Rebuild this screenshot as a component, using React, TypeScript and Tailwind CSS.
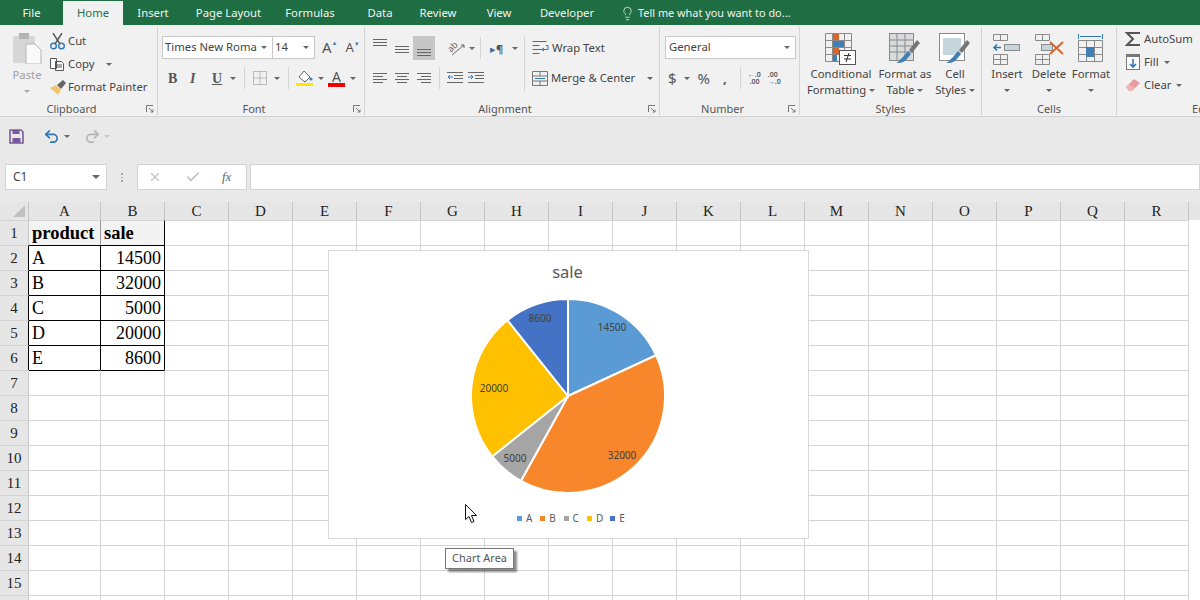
import { Lightbulb, Undo2, Redo2, X, Check } from "lucide-react";

const ui = "font-['Noto_Sans',sans-serif]";
const serif = "font-['Liberation_Serif',serif]";

const tabs = [
  { name: "File", w: "w-[63px]" },
  { name: "Home", w: "w-[60px]", active: true },
  { name: "Insert", w: "w-[60px]" },
  { name: "Page Layout", w: "w-[91px]" },
  { name: "Formulas", w: "w-[72px]" },
  { name: "Data", w: "w-[68px]" },
  { name: "Review", w: "w-[48px]" },
  { name: "View", w: "w-[74px]" },
  { name: "Developer", w: "w-[62px]" },
];

const columns = [
  { name: "A", w: "w-[72px]" },
  { name: "B", w: "w-[64px]" },
  ...["C", "D", "E", "F", "G", "H", "I", "J", "K", "L", "M", "N", "O", "P", "Q", "R"].map((name) => ({ name, w: "w-[64px]" })),
];

const data = [
  { name: "A", value: 14500, color: "#5b9bd5", lx: 612, ly: 327 },
  { name: "B", value: 32000, color: "#f8862b", lx: 622, ly: 455 },
  { name: "C", value: 5000, color: "#a5a5a5", lx: 515, ly: 458 },
  { name: "D", value: 20000, color: "#ffc000", lx: 494, ly: 388 },
  { name: "E", value: 8600, color: "#4472c4", lx: 540, ly: 318 },
];

const Caret = ({ className = "" }: { className?: string }) => (
  <span className={`inline-block w-0 h-0 border-x-[3px] border-x-transparent border-t-[3px] border-t-[#666] ${className}`} />
);

const GroupLabel = ({ children, launcher = true }: { children: string; launcher?: boolean }) => (
  <div className={`absolute bottom-[-1px] left-0 right-0 flex justify-center text-[11px] leading-[14px] text-[#555] ${launcher ? "pr-[14px]" : ""}`}>
    {children}
    {launcher && (
      <svg className="absolute right-[3px] top-[3px]" width="8" height="8" viewBox="0 0 8 8" fill="none" stroke="#777">
        <path d="M.5 7V.5H7M3 3l4 4M7 4.5V7H4.5" />
      </svg>
    )}
  </div>
);

const Group = ({ w, children }: { w: string; children: React.ReactNode }) => (
  <div className={`relative h-[88px] shrink-0 border-r border-[#d4d4d4] ${w}`}>{children}</div>
);

const Lines = ({ align }: { align: "l" | "c" | "r" }) => {
  const rows = align === "l" ? [[0, 14], [0, 10], [0, 14], [0, 10]] : align === "c" ? [[0, 14], [2, 10], [0, 14], [2, 10]] : [[0, 14], [4, 10], [0, 14], [4, 10]];
  return (
    <svg width="14" height="10" viewBox="0 0 14 10" stroke="#666">
      {rows.map(([x, w], i) => (
        <path key={i} d={`M${x} ${i * 3 + 0.5}h${w}`} />
      ))}
    </svg>
  );
};

function Clipboard() {
  return (
    <Group w="w-[158px]">
      <div className="flex gap-[4px] pl-[12px] pt-[5px]">
        <div className="flex w-[30px] flex-col items-center text-[#a0a0a0]">
          <svg className="mt-[1px]" width="30" height="31" viewBox="0 0 30 31">
            <rect x="1" y="3" width="22" height="27" rx="2" fill="#d6d6d6" />
            <rect x="7" y="0" width="10" height="6" fill="#b5b5b5" />
            <path d="M14 11h9l6 6v14H14z" fill="#fafafa" stroke="#b5b5b5" />
          </svg>
          <span className="mt-[3px] text-[11.3px] leading-[16px]">Paste</span>
          <Caret className="mt-[7px] border-t-[#aaa]" />
        </div>
        <div className="ml-[4px] flex flex-col gap-[5px] text-[11.3px] text-[#444]">
          <div className="flex h-[18px] items-center gap-[3px]">
            <svg width="15" height="17" viewBox="0 0 15 17" fill="none">
              <path d="M3 0l7 11M12 0L5 11" stroke="#555" strokeWidth="1.4" />
              <circle cx="3.5" cy="13" r="2.8" stroke="#2f78b5" strokeWidth="1.4" />
              <circle cx="11.5" cy="13" r="2.8" stroke="#2f78b5" strokeWidth="1.4" />
            </svg>
            <span>Cut</span>
          </div>
          <div className="flex h-[18px] items-center gap-[3px]">
            <svg width="15" height="15" viewBox="0 0 15 15" fill="#fff" stroke="#555">
              <path d="M.5 1.5h6v10h-6zM5.5 4.5h6l2 2v7h-8zM7 8h5M7 10h5" />
            </svg>
            <span>Copy</span>
            <Caret className="ml-[9px]" />
          </div>
          <div className="flex h-[18px] items-center gap-[2px]">
            <svg width="16" height="15" viewBox="0 0 16 15">
              <path d="M0 8l6-3 5 5-3 5z" fill="#efc46f" />
              <path d="M7 5l6-5 3 3-5 6z" fill="#666" />
            </svg>
            <span>Format Painter</span>
          </div>
        </div>
      </div>
      <GroupLabel>Clipboard</GroupLabel>
    </Group>
  );
}

function Font() {
  return (
    <Group w="w-[207px]">
      <div className="flex flex-col pl-[4px] pt-[9px]">
        <div className="flex items-center">
          <div className="flex h-[23px] w-[111px] items-center justify-between border border-[#c8c8c8] bg-white pl-[2px] pr-[5px] text-[11.3px] text-[#444]">
            <span className="whitespace-nowrap">Times New Roma</span>
            <Caret />
          </div>
          <div className="-ml-px flex h-[23px] w-[43px] items-center justify-between border border-[#c8c8c8] bg-white pl-[2px] pr-[5px] text-[11.3px] text-[#444]">
            <span>14</span>
            <Caret />
          </div>
          <div className="ml-[7px] flex items-start text-[15px] leading-none text-[#555]">
            A<span className="text-[6px] text-[#3f7fb5]">▲</span>
          </div>
          <div className="ml-[8px] flex items-start text-[13px] leading-none text-[#555]">
            A<span className="text-[6px] text-[#3f7fb5]">▼</span>
          </div>
        </div>
        <div className="flex h-[32px] items-center pl-[6px] pt-[6px] text-[#555]">
          <span className={`${serif} w-[22px] text-[14px] font-bold`}>B</span>
          <span className={`${serif} w-[22px] text-[14px] font-bold italic`}>I</span>
          <span className={`${serif} w-[17px] text-[14px] font-bold underline`}>U</span>
          <Caret className="ml-[1px]" />
          <div className="ml-[8px] h-[22px] w-px bg-[#d4d4d4]" />
          <svg className="ml-[8px]" width="14" height="14" viewBox="0 0 14 14" fill="none" stroke="#888" strokeDasharray="1 1">
            <path d="M.5.5h13v13H.5zM.5 7h13M7 .5v13" />
          </svg>
          <Caret className="ml-[7px]" />
          <div className="ml-[8px] h-[22px] w-px bg-[#d4d4d4]" />
          <svg className="ml-[7px]" width="17" height="16" viewBox="0 0 17 16">
            <path d="M8 1l6 6-5 5-6-5z" fill="#fff" stroke="#666" />
            <circle cx="15" cy="9" r="1.6" fill="#3f7fb5" />
            <rect y="13" width="17" height="3" fill="#ffe600" />
          </svg>
          <Caret className="ml-[5px]" />
          <div className="ml-[4px] flex w-[17px] flex-col items-center">
            <span className="text-[14px] leading-[13px] text-[#555]">A</span>
            <span className="h-[4px] w-[17px] bg-[#f00000]" />
          </div>
          <Caret className="ml-[5px]" />
        </div>
      </div>
      <GroupLabel>Font</GroupLabel>
    </Group>
  );
}

function Alignment() {
  return (
    <Group w="w-[295px]">
      <div className="flex h-[72px] pl-[4px] pt-[9px] text-[11.3px] text-[#444]">
        <div className="flex w-[155px] flex-col">
          <div className="flex h-[24px] items-center">
            <div className="flex h-[24px] w-[22px] items-start justify-center pt-[3px]">
              <svg width="14" height="8" stroke="#666"><path d="M0 .5h14M0 3.5h14M0 6.5h14" /></svg>
            </div>
            <div className="flex h-[24px] w-[22px] items-center justify-center pt-[3px]">
              <svg width="14" height="8" stroke="#666"><path d="M0 .5h14M0 3.5h14M0 6.5h14" /></svg>
            </div>
            <div className="flex h-[24px] w-[22px] items-end justify-center bg-[#c6c6c6] pb-[3px]">
              <svg width="14" height="8" stroke="#666"><path d="M0 .5h14M0 3.5h14M0 6.5h14" /></svg>
            </div>
            <div className="relative ml-[12px] h-[15px] w-[18px]">
              <span className="absolute left-0 top-0 -rotate-45 text-[9px] leading-[11px] text-[#666]">ab</span>
              <svg className="absolute left-0 top-0" width="18" height="15" viewBox="0 0 18 15" fill="none" stroke="#666">
                <path d="M5 14L17 4M14 4h3v3" />
              </svg>
            </div>
            <Caret className="ml-[4px]" />
            <div className="ml-[5px] h-[22px] w-px bg-[#d4d4d4]" />
            <span className="ml-[9px] text-[11px] leading-none text-[#3f6f9f]">▸</span>
            <span className="text-[11px] font-bold leading-none text-[#555]">¶</span>
            <Caret className="ml-[9px]" />
          </div>
          <div className="mt-[6px] flex h-[24px] items-center">
            <div className="flex w-[22px] justify-center"><Lines align="l" /></div>
            <div className="flex w-[22px] justify-center"><Lines align="c" /></div>
            <div className="flex w-[22px] justify-center"><Lines align="r" /></div>
            <div className="mx-[4px] h-[22px] w-px bg-[#d4d4d4]" />
            <svg className="ml-[3px]" width="16" height="12" viewBox="0 0 16 12" fill="none" stroke="#666">
              <path d="M0 .5h16M7 3.5h9M7 6.5h9M0 10.5h16" />
              <path d="M6 5H1M3 3L1 5l2 2" stroke="#2f78b5" />
            </svg>
            <svg className="ml-[5px]" width="16" height="12" viewBox="0 0 16 12" fill="none" stroke="#666">
              <path d="M0 .5h16M7 3.5h9M7 6.5h9M0 10.5h16" />
              <path d="M0 5h5M3 3l2 2-2 2" stroke="#2f78b5" />
            </svg>
          </div>
        </div>
        <div className="mr-[7px] h-[55px] w-px bg-[#d4d4d4]" />
        <div className="flex flex-col">
          <div className="flex h-[24px] items-center gap-[3px]">
            <svg width="17" height="15" viewBox="0 0 17 15" fill="none" stroke="#666">
              <path d="M.5.5h14M.5 4.5h7M.5 8.5h14M.5 12.5h7" />
              <path d="M14 4.5h2v4h-6M12 7l-2 1.5L12 10" stroke="#2f78b5" />
            </svg>
            <span>Wrap Text</span>
          </div>
          <div className="mt-[6px] flex h-[24px] items-center gap-[3px]">
            <svg width="16" height="15" viewBox="0 0 16 15" fill="none" stroke="#777">
              <path d="M.5.5h15v14H.5zM.5 5h15M.5 10h15M8 .5V5M8 10v4.5" />
              <path d="M3 7.5h10" stroke="#2f78b5" />
            </svg>
            <span>Merge &amp; Center</span>
            <Caret className="ml-[9px]" />
          </div>
        </div>
      </div>
      <GroupLabel>Alignment</GroupLabel>
    </Group>
  );
}

function NumberGroup() {
  return (
    <Group w="w-[140px]">
      <div className="pl-[5px] pt-[9px] text-[#555]">
        <div className="flex h-[23px] w-[131px] items-center justify-between border border-[#c8c8c8] bg-white pl-[3px] pr-[5px] text-[11.3px] text-[#444]">
          <span>General</span>
          <Caret />
        </div>
        <div className="mt-[7px] flex h-[24px] items-center pl-[3px]">
          <span className="text-[15px] leading-none">$</span>
          <Caret className="ml-[7px]" />
          <span className="ml-[8px] text-[15px] leading-none">%</span>
          <span className="ml-[13px] text-[13px] font-bold leading-none">,</span>
          <div className="ml-[13px] h-[22px] w-px bg-[#d4d4d4]" />
          <span className="ml-[7px] w-[18px] text-[7px] font-semibold leading-[7px]">
            <span className="text-[#2f78b5]">←</span>.0<br />
            &nbsp;.00
          </span>
          <span className="ml-[2px] w-[18px] text-[7px] font-semibold leading-[7px]">
            .00<br />
            <span className="text-[#2f78b5]">→</span>.0
          </span>
        </div>
      </div>
      <GroupLabel>Number</GroupLabel>
    </Group>
  );
}

function Styles() {
  return (
    <Group w="w-[182px]">
      <div className="flex pl-[7px] pt-[6px] text-[11.3px] leading-[16px] text-[#444]">
        <div className="flex w-[68px] flex-col items-center">
          <svg width="32" height="32" viewBox="0 0 32 32" fill="none" stroke="#8a8a8a">
            <path d="M.5.5h26v28H.5zM.5 7.5h26M.5 14.5h26M.5 21.5h26M7.5.5v28M19.5.5v28" />
            <rect x="8" y="1" width="6" height="6" fill="#d9652b" stroke="none" />
            <rect x="8" y="8" width="11" height="6" fill="#3f7fb5" stroke="none" />
            <rect x="8" y="15" width="6" height="6" fill="#d9652b" stroke="none" />
            <rect x="8" y="22" width="4" height="6" fill="#3f7fb5" stroke="none" />
            <rect x="14.5" y="17.5" width="16" height="14" fill="#fff" stroke="#555" />
            <path d="M19 22.5h7M19 26h7M24 20l-3 9" stroke="#333" />
          </svg>
          <span className="mt-px whitespace-nowrap">Conditional</span>
          <span className="whitespace-nowrap">Formatting <Caret className="mb-[2px]" /></span>
        </div>
        <div className="flex w-[60px] flex-col items-center">
          <svg width="32" height="32" viewBox="0 0 32 32" fill="none" stroke="#8a8a8a">
            <rect x=".5" y=".5" width="24" height="27" fill="#d8dcdc" />
            <path d="M.5 7h24M.5 13h24M.5 19h24M8 .5v27M16 .5v27" />
            <path d="M14 24l5-6 3 3-5 6c-3 3-7 3-10 3 3-1 4-4 7-6z" fill="#3f7fb5" stroke="none" />
            <path d="M20 17l8-10 3 3-8 10z" fill="#777" stroke="none" />
          </svg>
          <span className="mt-px whitespace-nowrap">Format as</span>
          <span className="whitespace-nowrap">Table <Caret className="mb-[2px]" /></span>
        </div>
        <div className="flex w-[40px] flex-col items-center">
          <svg width="32" height="32" viewBox="0 0 32 32" fill="none" stroke="#8a8a8a">
            <rect x=".5" y=".5" width="25" height="27" fill="#fff" />
            <rect x="4" y="5" width="18" height="17" fill="#c4d5dc" stroke="none" />
            <path d="M14 24l5-6 3 3-5 6c-3 3-7 3-10 3 3-1 4-4 7-6z" fill="#3f7fb5" stroke="none" />
            <path d="M20 17l8-10 3 3-8 10z" fill="#777" stroke="none" />
          </svg>
          <span className="mt-px whitespace-nowrap">Cell</span>
          <span className="whitespace-nowrap">Styles <Caret className="mb-[2px]" /></span>
        </div>
      </div>
      <GroupLabel launcher={false}>Styles</GroupLabel>
    </Group>
  );
}

function Cells() {
  return (
    <Group w="w-[135px]">
      <div className="flex pl-[4px] pt-[6px] text-[11.3px] leading-[16px] text-[#444]">
        <div className="flex w-[42px] flex-col items-center">
          <svg width="32" height="32" viewBox="0 0 32 32" fill="none" stroke="#8a8a8a">
            <path d="M2.5 1.5h14v6h-14zM9.5 1.5v6M2.5 21.5h14v10h-14zM2.5 26.5h14M9.5 21.5v10" />
            <rect x="13.5" y="11.5" width="15" height="6" fill="#c4d5dc" />
            <path d="M10 14.5H3M6 11.5l-3 3 3 3" stroke="#2f78b5" strokeWidth="1.6" />
          </svg>
          <span className="mt-px">Insert</span>
          <Caret className="mt-[7px]" />
        </div>
        <div className="flex w-[42px] flex-col items-center">
          <svg width="32" height="32" viewBox="0 0 32 32" fill="none" stroke="#8a8a8a">
            <path d="M2.5 1.5h14v6h-14zM9.5 1.5v6M2.5 21.5h14v10h-14zM2.5 26.5h14M9.5 21.5v10" />
            <rect x="8.5" y="11.5" width="11" height="6" fill="#c4d5dc" />
            <path d="M17 9l13 12M30 9L17 21" stroke="#d9652b" strokeWidth="2" />
          </svg>
          <span className="mt-px">Delete</span>
          <Caret className="mt-[7px]" />
        </div>
        <div className="flex w-[42px] flex-col items-center">
          <svg width="32" height="32" viewBox="0 0 32 32" fill="none" stroke="#8a8a8a">
            <path d="M3.5 1v5M27.5 1v5M5 3.5h21" stroke="#2f78b5" />
            <path d="M3.5 7.5h24v21h-24zM3.5 14.5h24M3.5 21.5h24M11.5 7.5v21M19.5 7.5v21" />
            <rect x="11" y="14" width="8" height="10" fill="#3f7fb5" stroke="none" />
          </svg>
          <span className="mt-px">Format</span>
          <Caret className="mt-[7px]" />
        </div>
      </div>
      <GroupLabel launcher={false}>Cells</GroupLabel>
    </Group>
  );
}

function Editing() {
  return (
    <div className="relative h-[88px] flex-1 overflow-hidden">
      <div className="flex flex-col gap-[5px] pl-[8px] pt-[3px] text-[11.3px] text-[#444]">
        <div className="flex h-[18px] items-center gap-[3px]">
          <svg width="16" height="16" viewBox="0 0 16 16" fill="none" stroke="#555" strokeWidth="2">
            <path d="M15 2H2l6 6-6 6h13" />
          </svg>
          <span>AutoSum</span>
        </div>
        <div className="flex h-[18px] items-center gap-[3px]">
          <svg width="16" height="16" viewBox="0 0 16 16" fill="none" stroke="#777">
            <rect x="1.5" y=".5" width="13" height="15" fill="#fff" />
            <rect x="1" y="0" width="14" height="3" fill="#777" stroke="none" />
            <path d="M8 5v8M5 10l3 3 3-3" stroke="#2f78b5" strokeWidth="1.6" />
          </svg>
          <span>Fill</span>
          <Caret className="ml-[2px]" />
        </div>
        <div className="flex h-[18px] items-center gap-[3px]">
          <svg width="16" height="14" viewBox="0 0 16 14">
            <path d="M1 9l8-8 6 4-8 8H4z" fill="#eb9a9a" />
            <path d="M1 9l3-3 6 4-3 3H4z" fill="#e6b8b8" />
          </svg>
          <span>Clear</span>
          <Caret className="ml-[2px]" />
        </div>
      </div>
      <div className="absolute bottom-[-1px] left-[75px] text-[11px] leading-[14px] text-[#555]">Editing</div>
    </div>
  );
}

function Pie() {
  const cx = 239;
  const cy = 145;
  const r = 97;
  const total = data.reduce((s, d) => s + d.value, 0);
  let acc = 0;
  const slices = data.map((d) => {
    const a0 = (acc / total) * Math.PI * 2;
    acc += d.value;
    const a1 = (acc / total) * Math.PI * 2;
    const x0 = cx + r * Math.sin(a0);
    const y0 = cy - r * Math.cos(a0);
    const x1 = cx + r * Math.sin(a1);
    const y1 = cy - r * Math.cos(a1);
    const large = a1 - a0 > Math.PI ? 1 : 0;
    return { ...d, path: `M${cx} ${cy}L${x0} ${y0}A${r} ${r} 0 ${large} 1 ${x1} ${y1}Z` };
  });
  return (
    <svg className="absolute left-0 top-0" width="478" height="286" viewBox="0 0 478 286">
      {slices.map((s) => (
        <path key={s.name} d={s.path} fill={s.color} stroke="#fff" strokeWidth="2" />
      ))}
      {data.map((d) => (
        <text key={d.name} x={d.lx - 329} y={d.ly - 251 + 4} textAnchor="middle" fontSize="10" fill="#404040" fontFamily="Noto Sans, sans-serif">
          {d.value}
        </text>
      ))}
    </svg>
  );
}

function Chart() {
  return (
    <div className={`absolute left-[328px] top-[250px] h-[289px] w-[481px] border border-[#d9d9d9] bg-white ${ui}`}>
      <Pie />
      <div className="absolute inset-x-0 top-[10px] pr-[2px] text-center text-[16.5px] leading-[22px] text-[#595959]">sale</div>
      <div className="absolute left-[188px] top-[260px] flex text-[10px] leading-[14px] text-[#595959]">
        {data.map((d) => (
          <div key={d.name} className="flex w-[23.3px] items-center gap-[4px]">
            <span className="h-[5px] w-[5px]" style={{ backgroundColor: d.color }} />
            {d.name}
          </div>
        ))}
      </div>
    </div>
  );
}

export default function App() {
  const cells: Record<number, [string, string]> = {
    1: ["product", "sale"],
    2: ["A", "14500"],
    3: ["B", "32000"],
    4: ["C", "5000"],
    5: ["D", "20000"],
    6: ["E", "8600"],
  };
  return (
    <div className={`relative h-[600px] w-[1200px] overflow-hidden bg-white ${ui}`}>
      {/* Title tabs */}
      <div className="flex h-[25px] items-end bg-[#1f6e43] text-[11.3px] text-[#f2f2f2]">
        {tabs.map((t) => (
          <div
            key={t.name}
            className={`flex h-[24px] items-center justify-center ${t.w} ${t.active ? "bg-[#f1f1f2] text-[#1f6e43]" : ""}`}
          >
            {t.name}
          </div>
        ))}
        <div className="flex h-[24px] items-center gap-[3px] pl-[22px] text-[10.9px]">
          <Lightbulb size={15} strokeWidth={1.2} />
          <span>Tell me what you want to do...</span>
        </div>
      </div>

      {/* Ribbon */}
      <div className="flex h-[92px] border-b border-[#d2d2d2] bg-[#f1f1f2] pt-[2px]">
        <Clipboard />
        <Font />
        <Alignment />
        <NumberGroup />
        <Styles />
        <Cells />
        <Editing />
      </div>

      {/* Quick access */}
      <div className="flex h-[38px] items-center bg-[#e9e9e9] pl-[9px]">
        <svg width="15" height="15" viewBox="0 0 15 15" fill="none" stroke="#7a5a9e" strokeWidth="1.6">
          <path d="M1 1h11l2 2v11H1z" />
          <rect x="3.5" y="1" width="7" height="4" fill="#7a5a9e" stroke="none" />
          <rect x="3.5" y="9" width="8" height="5" fill="#7a5a9e" stroke="none" />
        </svg>
        <Undo2 size={17} strokeWidth={2.4} className="ml-[19px] text-[#2f78b5]" />
        <Caret className="ml-[4px]" />
        <Redo2 size={17} strokeWidth={2.4} className="ml-[14px] text-[#b5b5b5]" />
        <Caret className="ml-[3px] border-t-[#c8c8c8]" />
      </div>

      {/* Formula bar */}
      <div className="flex h-[47px] items-start bg-[#e9e9e9] pt-[9px]">
        <div className="ml-[5px] flex h-[26px] w-[102px] items-center justify-between border border-[#d4d4d4] bg-white pl-[7px] pr-[6px] text-[12px] text-[#444]">
          <span>C1</span>
          <Caret className="border-x-[4px] border-t-[4px]" />
        </div>
        <div className="flex w-[30px] flex-col items-center gap-[2px] pt-[9px]">
          <span className="h-[1.5px] w-[2px] bg-[#aaa]" />
          <span className="h-[1.5px] w-[2px] bg-[#aaa]" />
          <span className="h-[1.5px] w-[2px] bg-[#aaa]" />
        </div>
        <div className="flex h-[26px] w-[110px] items-center border border-[#d4d4d4] bg-white pl-[10px]">
          <X size={14} className="text-[#c2c2c2]" />
          <Check size={16} strokeWidth={2.6} className="ml-[23px] text-[#c2c2c2]" />
          <span className={`${serif} ml-[21px] text-[13px] italic text-[#666]`}>fx</span>
        </div>
        <div className="ml-[3px] h-[26px] flex-1 border border-[#d4d4d4] bg-white" />
      </div>

      {/* Column headers */}
      <div className={`flex h-[18px] bg-[#e6e6e6] ${serif} text-[15px] leading-[18px] text-[#222]`}>
        <div className="relative w-[29px] shrink-0 border-r border-[#c6c6c6]">
          <span className="absolute bottom-[3px] right-[3px] h-0 w-0 border-b-[12px] border-l-[12px] border-b-[#c0c0c0] border-l-transparent" />
        </div>
        {columns.map((c) => (
          <div key={c.name} className={`${c.w} shrink-0 border-r border-[#c6c6c6] text-center`}>
            {c.name}
          </div>
        ))}
      </div>

      {/* Rows */}
      {Array.from({ length: 16 }, (_, i) => i + 1).map((n) => {
        const row = cells[n];
        return (
          <div key={n} className={`flex h-[25px] ${serif}`}>
            <div
              className={`w-[29px] shrink-0 border-r border-t border-t-[#d4d4d4] bg-[#e6e6e6] text-center text-[15px] leading-[24px] text-[#222] ${
                n >= 2 && n <= 6 ? "border-r-black" : "border-r-[#c6c6c6]"
              }`}
            >
              {n < 16 ? n : ""}
            </div>
            {columns.map((c, i) => {
              const filled = row && i < 2;
              const right = row && i === 1 ? "border-r-black" : n >= 2 && n <= 6 && i === 0 ? "border-r-black" : n === 1 && i === 0 ? "border-r-[#999]" : "border-r-[#d4d4d4]";
              const top = i < 2 && n >= 2 && n <= 7 ? "border-t-black" : "border-t-[#d4d4d4]";
              const text = n === 1 ? "font-bold text-[18.5px]" : "text-[18px]";
              const align = i === 1 && n > 1 ? "text-right pr-[3px]" : "text-left pl-[3px]";
              const bg = n === 1 && i < 2 ? "bg-[#f3f3f3]" : "";
              return (
                <div key={c.name} className={`${c.w} shrink-0 border-r border-t ${right} ${top} ${bg} ${text} ${align} leading-[24px] text-black`}>
                  {filled ? row[i] : ""}
                </div>
              );
            })}
          </div>
        );
      })}

      <Chart />

      {/* Mouse pointer */}
      <svg className="absolute left-[465px] top-[504px]" width="13" height="20" viewBox="0 0 13 20" fill="#fff" stroke="#111">
        <path d="M.5.5v15l3.5-3 2.5 6 2.5-1-2.5-6h5z" />
      </svg>

      {/* Tooltip */}
      <div className="absolute left-[445px] top-[548px] flex h-[21px] w-[69px] items-center justify-center border border-[#767676] bg-white text-[11px] text-[#575757] shadow-[3px_3px_2px_rgba(0,0,0,0.45)]">
        Chart Area
      </div>
    </div>
  );
}
